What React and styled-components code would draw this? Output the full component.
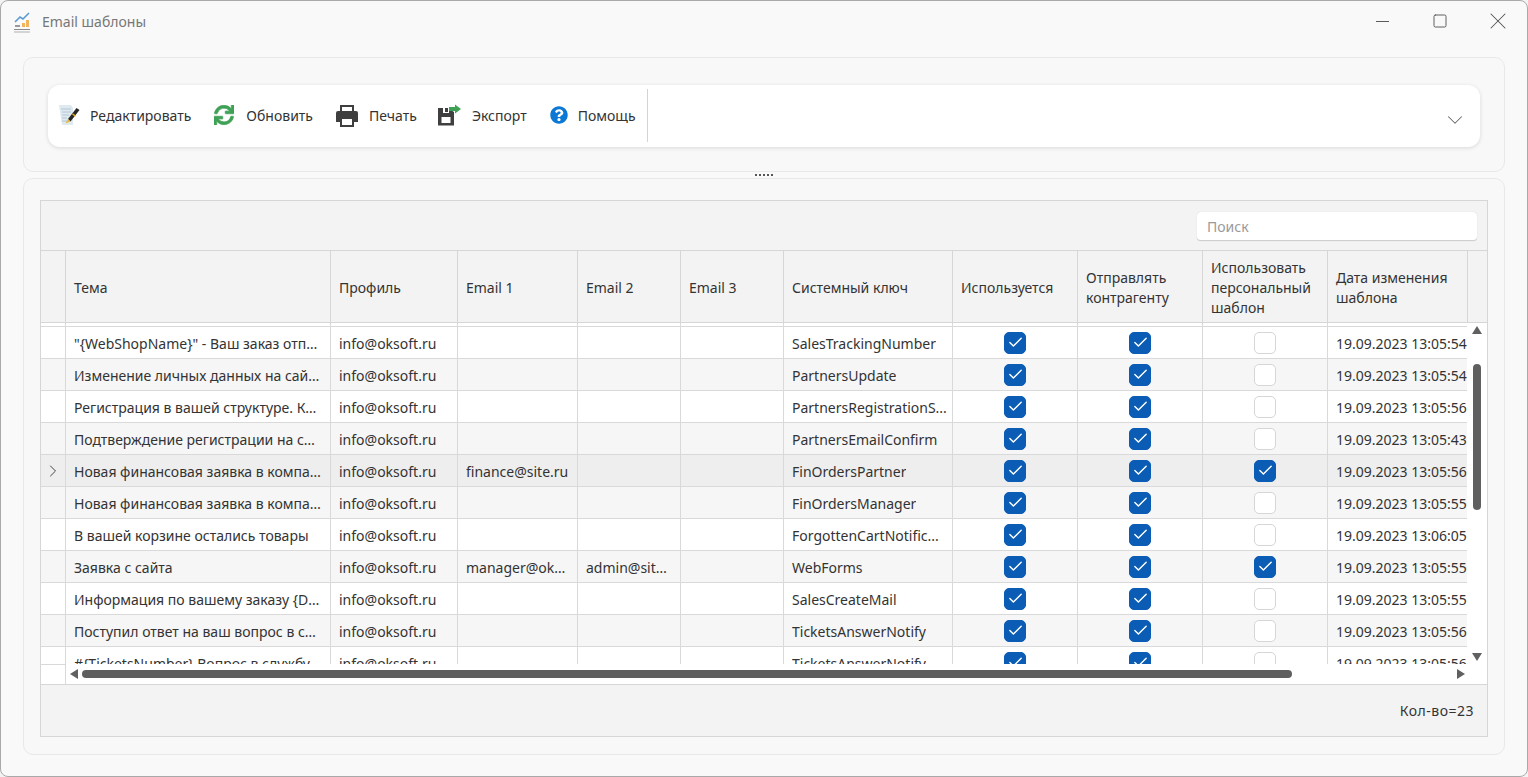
import React from 'react'
import styled, { createGlobalStyle } from 'styled-components'
import { FaQuestionCircle, FaSync } from 'react-icons/fa'
import { ChevronDown, ChevronRight, Check, Minus, Square, X } from 'lucide-react'

const GlobalStyle = createGlobalStyle`
    html, body {
        margin: 0;
        height: 100%;
        background: #f3f3f3;
    }
    body {
        font-family: "Noto Sans", "Open Sans", sans-serif;
        font-size: 14px;
        color: #333;
    }
`

const COLUMNS = '25px 265px 127px 120px 103px 103px 169px 125px 125px 125px 140px 1fr'

const Window = styled.div`
    box-sizing: border-box;
    width: 1528px;
    height: 777px;
    display: flex;
    flex-direction: column;
    padding: 0 22px 21px;
    background: #f9f9f9;
    border: 1px solid #a9a9a9;
    border-radius: 8px;
    overflow: hidden;
`

const TitleBar = styled.div`
    box-sizing: border-box;
    height: 56px;
    flex: none;
    display: flex;
    align-items: flex-start;
    margin: 0 -22px;
    padding: 10px 0 0 11px;
`

const AppTitle = styled.span`
    margin-left: 10px;
    margin-top: 1px;
    line-height: 20px;
    color: #777;
`

const WindowButtons = styled.div`
    margin-left: auto;
    display: flex;
    color: #555;
`

const WindowButton = styled.div`
    width: 58px;
    height: 20px;
    display: flex;
    align-items: center;
    justify-content: center;
`

const Panel = styled.section`
    box-sizing: border-box;
    border: 1px solid #e8e8e8;
    border-radius: 10px;
    background: #f8f8f8;
`

const ToolPanel = styled(Panel)`
    height: 115px;
    flex: none;
    padding: 27px 24px;
`

const Toolbar = styled.div`
    box-sizing: border-box;
    height: 62px;
    display: flex;
    align-items: center;
    padding: 0 12px 2px 11px;
    background: #fff;
    border-radius: 12px;
    box-shadow: 0 1px 4px rgba(0, 0, 0, 0.13);
`

const ToolButton = styled.div`
    display: flex;
    align-items: center;
    gap: ${props => props.$space}px;
    margin-right: ${props => props.$gap}px;
    white-space: nowrap;
`

const ToolDivider = styled.div`
    width: 1px;
    height: 53px;
    background: #d4d4d4;
`

const ToolExpand = styled.div`
    margin-left: auto;
    margin-top: 9px;
    display: flex;
    color: #666;
`

const Splitter = styled.div`
    height: 6px;
    flex: none;
    display: flex;
    align-items: center;
    justify-content: center;
    &::before {
        content: '';
        width: 19px;
        height: 2px;
        background: repeating-linear-gradient(90deg, #555 0 2px, transparent 2px 4px);
    }
`

const GridPanel = styled(Panel)`
    flex: 1;
    min-height: 0;
    padding: 21px 16px 17px;
    display: flex;
`

const Grid = styled.div`
    flex: 1;
    display: flex;
    flex-direction: column;
    border: 1px solid #d6d6d6;
    background: #f3f3f3;
`

const GridTop = styled.div`
    height: 50px;
    flex: none;
    display: flex;
    justify-content: flex-end;
    align-items: flex-start;
    padding: 11px 10px 0 0;
    box-sizing: border-box;
    border-bottom: 1px solid #d6d6d6;
`

const Search = styled.div`
    box-sizing: border-box;
    width: 280px;
    height: 29px;
    display: flex;
    align-items: center;
    padding-left: 10px;
    background: #fff;
    border-radius: 4px;
    border-bottom: 1px solid #cfcfcf;
    box-shadow: 0 0 1px rgba(0, 0, 0, 0.2);
    color: #9a9a9a;
`

const HeaderRow = styled.div`
    height: 72px;
    flex: none;
    box-sizing: border-box;
    display: grid;
    grid-template-columns: ${COLUMNS};
    border-bottom: 1px solid #d6d6d6;
`

const HeaderCell = styled.div`
    display: flex;
    align-items: center;
    padding: 2px 0 0 8px;
    line-height: 20px;
    border-right: ${props => (props.$last ? 'none' : '1px solid #d6d6d6')};
`

const BodyWrap = styled.div`
    flex: none;
    display: flex;
    flex-direction: column;
    background: #fff;
`

const RowsArea = styled.div`
    height: 341px;
    flex: none;
    overflow: hidden;
    position: relative;
`

const Row = styled.div`
    height: ${props => props.$height || 32}px;
    box-sizing: border-box;
    display: grid;
    grid-template-columns: ${COLUMNS};
    background: ${props => (props.$selected ? '#eeeeee' : props.$alt ? '#f6f6f6' : '#fff')};
    border-bottom: 1px solid #d9d9d9;
`

const Cell = styled.div`
    display: flex;
    align-items: center;
    justify-content: ${props => (props.$center ? 'center' : 'flex-start')};
    padding: ${props => (props.$center ? '0' : props.$flush ? '0 0 0 8px' : '0 8px')};
    border-right: 1px solid #d9d9d9;
    min-width: 0;
    color: #333;
`

const CellText = styled.span`
    padding-top: 2px;
    overflow: hidden;
    white-space: nowrap;
    text-overflow: ${props => (props.$clip ? 'clip' : 'ellipsis')};
`

const Indicator = styled(Cell)`
    padding: 0;
    justify-content: center;
    color: #444;
`

const CheckBox = styled.div`
    box-sizing: border-box;
    width: 22px;
    height: 22px;
    flex: none;
    display: flex;
    align-items: center;
    justify-content: center;
    border-radius: 5px;
    color: #fff;
    background: ${props => (props.$on ? '#0b5cb5' : '#fff')};
    border: 1px solid ${props => (props.$on ? '#0b5cb5' : '#d6d6d6')};
`

const VScroll = styled.div`
    position: absolute;
    top: 0;
    right: 0;
    bottom: 0;
    width: 20px;
    display: flex;
    flex-direction: column;
    align-items: center;
    background: #fff;
    box-sizing: border-box;
`

const ArrowUp = styled.div`
    margin-top: 3px;
    width: 0;
    height: 0;
    border-left: 5px solid transparent;
    border-right: 5px solid transparent;
    border-bottom: 8px solid #606060;
`

const ArrowDown = styled.div`
    margin-top: auto;
    margin-bottom: 3px;
    width: 0;
    height: 0;
    border-left: 5px solid transparent;
    border-right: 5px solid transparent;
    border-top: 8px solid #606060;
`

const VThumb = styled.div`
    width: 8px;
    height: 146px;
    margin-top: 30px;
    background: #5f5f5f;
    border-radius: 4px;
`

const HScrollRow = styled.div`
    height: 21px;
    flex: none;
    box-sizing: border-box;
    display: flex;
    border-bottom: 1px solid #d6d6d6;
`

const HScrollCorner = styled.div`
    box-sizing: border-box;
    width: 25px;
    flex: none;
    border-top: 1px solid #d9d9d9;
    border-right: 1px solid #d9d9d9;
`

const HScroll = styled.div`
    width: 1402px;
    display: flex;
    align-items: center;
    padding: 0 3px 0 4px;
    box-sizing: border-box;
`

const ArrowLeft = styled.div`
    width: 0;
    height: 0;
    border-top: 5px solid transparent;
    border-bottom: 5px solid transparent;
    border-right: 8px solid #606060;
`

const ArrowRight = styled.div`
    margin-left: auto;
    width: 0;
    height: 0;
    border-top: 5px solid transparent;
    border-bottom: 5px solid transparent;
    border-left: 8px solid #606060;
`

const HThumb = styled.div`
    width: 1210px;
    height: 8px;
    margin-left: 4px;
    background: #5f5f5f;
    border-radius: 4px;
`

const Footer = styled.div`
    flex: 1;
    display: flex;
    align-items: center;
    justify-content: flex-end;
    padding-right: 13px;
    letter-spacing: 0.5px;
`

const AppLogo = () => (
    <svg width="20" height="22" viewBox="0 0 20 22">
        <path d="M3 11 L8 6 L11 8 L17 2" fill="none" stroke="#5b9bd1" strokeWidth="1.6" />
        <rect x="3" y="14" width="5" height="2" fill="#9a9a9a" />
        <rect x="10" y="12" width="3" height="4" fill="#efb45c" />
        <rect x="14" y="9" width="3" height="7" fill="#efb45c" />
        <rect x="2" y="18" width="16" height="1" fill="#8a8a8a" />
        <rect x="2" y="20.5" width="16" height="1" fill="#b0b0b0" />
    </svg>
)

const EditIcon = () => (
    <svg width="21" height="22" viewBox="0 0 21 22">
        <path d="M0 1 H12 L14 4 V21 H3 Z" fill="#dfe9f0" />
        <path d="M2 5 H12 M3 8 H12 M3 11 H10 M3 14 H8 M3 17 H8" stroke="#b4c6d3" strokeWidth="1" />
        <path d="M9 15 L17.500 4 L20.500 6 L11.500 17.500 Z" fill="#262626" />
        <path d="M13 10.500 L16 12.800 L16.900 11.600 L13.900 9.300 Z" fill="#d9a520" />
        <path d="M6.500 19.500 L9 15 L11.500 17.500 Z" fill="#e6b93e" />
    </svg>
)

const PrintIcon = () => (
    <svg width="22" height="23" viewBox="0 0 22 23">
        <path d="M4 1 H18 V8 H16 V3 H6 V8 H4 Z" fill="#3f3f3f" />
        <path d="M2 7 H20 Q22 7 22 9 V18 H18 V13 H4 V18 H0 V9 Q0 7 2 7 Z" fill="#3f3f3f" />
        <path d="M5 14 H17 V22 H5 Z" fill="#fff" stroke="#3f3f3f" strokeWidth="2" />
    </svg>
)

const ExportIcon = () => (
    <svg width="24" height="22" viewBox="0 0 24 22">
        <path d="M1 4 H6 V9 H12 V6 H14 L17 8 V21.500 H1 Z M4.500 13 V19 H13.500 V13 Z" fill="#3f3f3f" fillRule="evenodd" />
        <rect x="8" y="4" width="3" height="4" fill="#3f3f3f" />
        <path d="M12 3 H18 V0.500 L24 5 L18 9.500 V7 H12 Z" fill="#3ea155" />
    </svg>
)

const tools = [
    { label: 'Редактировать', icon: <EditIcon />, space: 10, gap: 23 },
    { label: 'Обновить', icon: <FaSync size={20} color="#3ea155" stroke="#3ea155" strokeWidth={18} />, space: 12, gap: 23 },
    { label: 'Печать', icon: <PrintIcon />, space: 11, gap: 20 },
    { label: 'Экспорт', icon: <ExportIcon />, space: 11, gap: 23 },
    { label: 'Помощь', icon: <FaQuestionCircle size={18} color="#0a78d4" />, space: 10, gap: 11 },
]

const headers = [
    '', 'Тема', 'Профиль', 'Email 1', 'Email 2', 'Email 3', 'Системный ключ', 'Используется',
    <>Отправлять<br />контрагенту</>,
    <>Использовать<br />персональный<br />шаблон</>,
    <>Дата изменения<br />шаблона</>,
]

const rows = [
    ['"{WebShopName}" - Ваш заказ отправлен', '', '', 'SalesTrackingNumber', false, '19.09.2023 13:05:54'],
    ['Изменение личных данных на сайте', '', '', 'PartnersUpdate', false, '19.09.2023 13:05:54'],
    ['Регистрация в вашей структуре. Контрагент', '', '', 'PartnersRegistrationS...', false, '19.09.2023 13:05:56'],
    ['Подтверждение регистрации на сайте', '', '', 'PartnersEmailConfirm', false, '19.09.2023 13:05:43'],
    ['Новая финансовая заявка в компании', 'finance@site.ru', '', 'FinOrdersPartner', true, '19.09.2023 13:05:56'],
    ['Новая финансовая заявка в компании', '', '', 'FinOrdersManager', false, '19.09.2023 13:05:55'],
    ['В вашей корзине остались товары', '', '', 'ForgottenCartNotific...', false, '19.09.2023 13:06:05'],
    ['Заявка с сайта', 'manager@oksoft.ru', 'admin@site.ru', 'WebForms', true, '19.09.2023 13:05:55'],
    ['Информация по вашему заказу {DocNumber}', '', '', 'SalesCreateMail', false, '19.09.2023 13:05:55'],
    ['Поступил ответ на ваш вопрос в службу', '', '', 'TicketsAnswerNotify', false, '19.09.2023 13:05:56'],
    ['#{TicketsNumber} Вопрос в службу поддержки', '', '', 'TicketsAnswerNotify', false, '19.09.2023 13:05:56'],
]

const Box = ({ on }) => (
    <CheckBox $on={on}>{on && <Check size={17} strokeWidth={2} />}</CheckBox>
)

const App = () => {
    return (
        <Window>
            <GlobalStyle />
            <TitleBar>
                <AppLogo />
                <AppTitle>Email шаблоны</AppTitle>
                <WindowButtons>
                    <WindowButton><Minus size={21} strokeWidth={1.1} /></WindowButton>
                    <WindowButton><Square size={16} strokeWidth={1.4} /></WindowButton>
                    <WindowButton><X size={28} strokeWidth={0.9} /></WindowButton>
                </WindowButtons>
            </TitleBar>
            <ToolPanel>
                <Toolbar>
                    {tools.map(tool => (
                        <ToolButton key={tool.label} $gap={tool.gap} $space={tool.space}>
                            {tool.icon}
                            {tool.label}
                        </ToolButton>
                    ))}
                    <ToolDivider />
                    <ToolExpand>
                        <ChevronDown size={26} strokeWidth={0.95} />
                    </ToolExpand>
                </Toolbar>
            </ToolPanel>
            <Splitter />
            <GridPanel>
                <Grid>
                    <GridTop>
                        <Search>Поиск</Search>
                    </GridTop>
                    <HeaderRow>
                        {headers.map((title, i) => (
                            <HeaderCell key={i}>{title}</HeaderCell>
                        ))}
                        <HeaderCell $last />
                    </HeaderRow>
                    <BodyWrap>
                        <RowsArea>
                            <Row $height={4}>
                                {headers.map((_, i) => <Cell key={i} />)}
                            </Row>
                            {rows.map((row, i) => (
                                <Row key={i} $alt={i % 2 === 1} $selected={i === 4}>
                                    <Indicator>
                                        {i === 4 && <ChevronRight size={20} strokeWidth={1.2} />}
                                    </Indicator>
                                    <Cell><CellText>{row[0]}</CellText></Cell>
                                    <Cell><CellText>info@oksoft.ru</CellText></Cell>
                                    <Cell><CellText>{row[1]}</CellText></Cell>
                                    <Cell><CellText>{row[2]}</CellText></Cell>
                                    <Cell />
                                    <Cell $flush><CellText $clip>{row[3]}</CellText></Cell>
                                    <Cell $center><Box on /></Cell>
                                    <Cell $center><Box on /></Cell>
                                    <Cell $center><Box on={row[4]} /></Cell>
                                    <Cell $flush><CellText $clip>{row[5]}</CellText></Cell>
                                </Row>
                            ))}
                            <VScroll>
                                <ArrowUp />
                                <VThumb />
                                <ArrowDown />
                            </VScroll>
                        </RowsArea>
                        <HScrollRow>
                            <HScrollCorner />
                            <HScroll>
                                <ArrowLeft />
                                <HThumb />
                                <ArrowRight />
                            </HScroll>
                        </HScrollRow>
                    </BodyWrap>
                    <Footer>Кол-во=23</Footer>
                </Grid>
            </GridPanel>
        </Window>
    )
}

export default App
